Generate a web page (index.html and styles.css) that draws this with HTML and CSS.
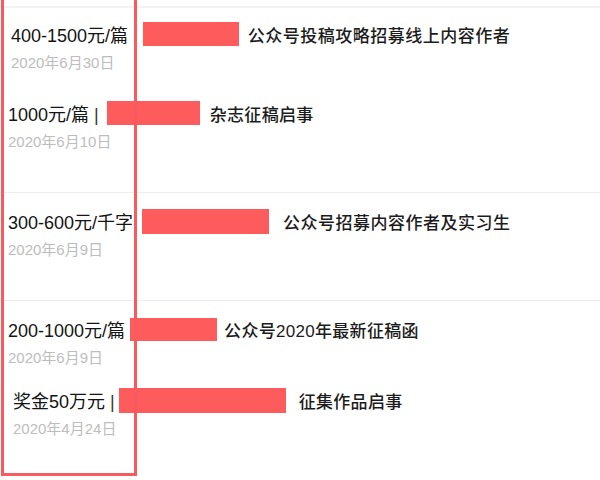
FILE: index.html
```html
<!DOCTYPE html>
<html lang="zh-CN">
<head>
<meta charset="utf-8">
<title>征稿列表</title>
<link rel="stylesheet" href="styles.css">
</head>
<body>
<div class="page">
  <div class="list">
    <section class="group first">
      <div class="item in11">
        <div class="title-line">
          <span class="price">400-1500元/篇</span>
          <span class="tick">|</span>
          <span class="redact r1"></span>
          <span class="title wide g9">公众号投稿攻略招募线上内容作者</span>
        </div>
        <div class="date">2020年6月30日</div>
      </div>
      <div class="item in8 gap28">
        <div class="title-line">
          <span class="price">1000元/篇 <span class="bar">|</span></span>
          <span class="redact r2"></span>
          <span class="title g10">杂志征稿启事</span>
        </div>
        <div class="date">2020年6月10日</div>
      </div>
    </section>
    <section class="group">
      <div class="item in8">
        <div class="title-line">
          <span class="price">300-600元/千字</span>
          <span class="redact r3"></span>
          <span class="title wide g14">公众号招募内容作者及实习生</span>
        </div>
        <div class="date">2020年6月9日</div>
      </div>
    </section>
    <section class="group">
      <div class="item in8">
        <div class="title-line">
          <span class="price">200-1000元/篇</span>
          <span class="redact r4"></span>
          <span class="title g7">公众号2020年最新征稿函</span>
        </div>
        <div class="date">2020年6月9日</div>
      </div>
      <div class="item in13 gap21">
        <div class="title-line">
          <span class="price">奖金50万元 <span class="bar">|</span></span>
          <span class="redact r5"></span>
          <span class="title g13">征集作品启事</span>
        </div>
        <div class="date">2020年4月24日</div>
      </div>
    </section>
  </div>
  <div class="highlight"></div>
</div>
</body>
</html>
```
FILE: styles.css
```css
html, body {
  margin: 0;
  padding: 0;
  background: #ffffff;
}
body {
  font-family: "Liberation Sans", "Noto Sans CJK SC", sans-serif;
  color: #1a1a1a;
}
.page {
  position: relative;
  width: 600px;
  height: 480px;
  overflow: hidden;
}
.list {
  padding-top: 6px;
}
.group {
  border-top: 1px solid #ededed;
  padding-top: 16px;
  padding-bottom: 40px;
}
.group.first {
  border-top: 2px solid #f3f3f3;
  padding-top: 14px;
}
.item.in8 { padding-left: 8px; }
.item.in11 { padding-left: 11px; }
.item.in13 { padding-left: 13px; }
.item.gap28 { margin-top: 28px; }
.item.gap21 { margin-top: 20px; }
.title-line {
  display: flex;
  align-items: center;
  height: 24px;
  white-space: nowrap;
}
.price {
  font-size: 18px;
  color: #141414;
}
.bar {
  color: #333;
}
.tick {
  color: #aaa;
  font-size: 14px;
  margin-left: 5px;
}
.redact {
  display: inline-block;
  height: 24px;
  background: #fd5b5c;
}
.r1 { width: 96px; margin-left: 6px; }
.r2 { width: 93px; margin-left: 8px; }
.r3 { width: 127px; margin-left: 9px; height: 25px; }
.r4 { width: 87px; margin-left: 5px; height: 23px; }
.r5 { width: 167px; margin-left: 4px; height: 25px; }
.title {
  font-size: 17px;
  font-weight: 500;
  color: #1c1c1c;
  letter-spacing: 0.3px;
}
.title.wide {
  letter-spacing: 0.5px;
}
.title.g7 { margin-left: 7px; }
.title.g9 { margin-left: 9px; }
.title.g10 { margin-left: 10px; }
.title.g13 { margin-left: 13px; }
.title.g14 { margin-left: 14px; }
.date {
  margin-top: 7px;
  height: 20px;
  line-height: 20px;
  font-size: 15px;
  color: #bdbdbd;
}
.highlight {
  position: absolute;
  left: 1px;
  top: -3px;
  width: 130px;
  height: 473px;
  border: 3px solid #f95a5e;
}
```
